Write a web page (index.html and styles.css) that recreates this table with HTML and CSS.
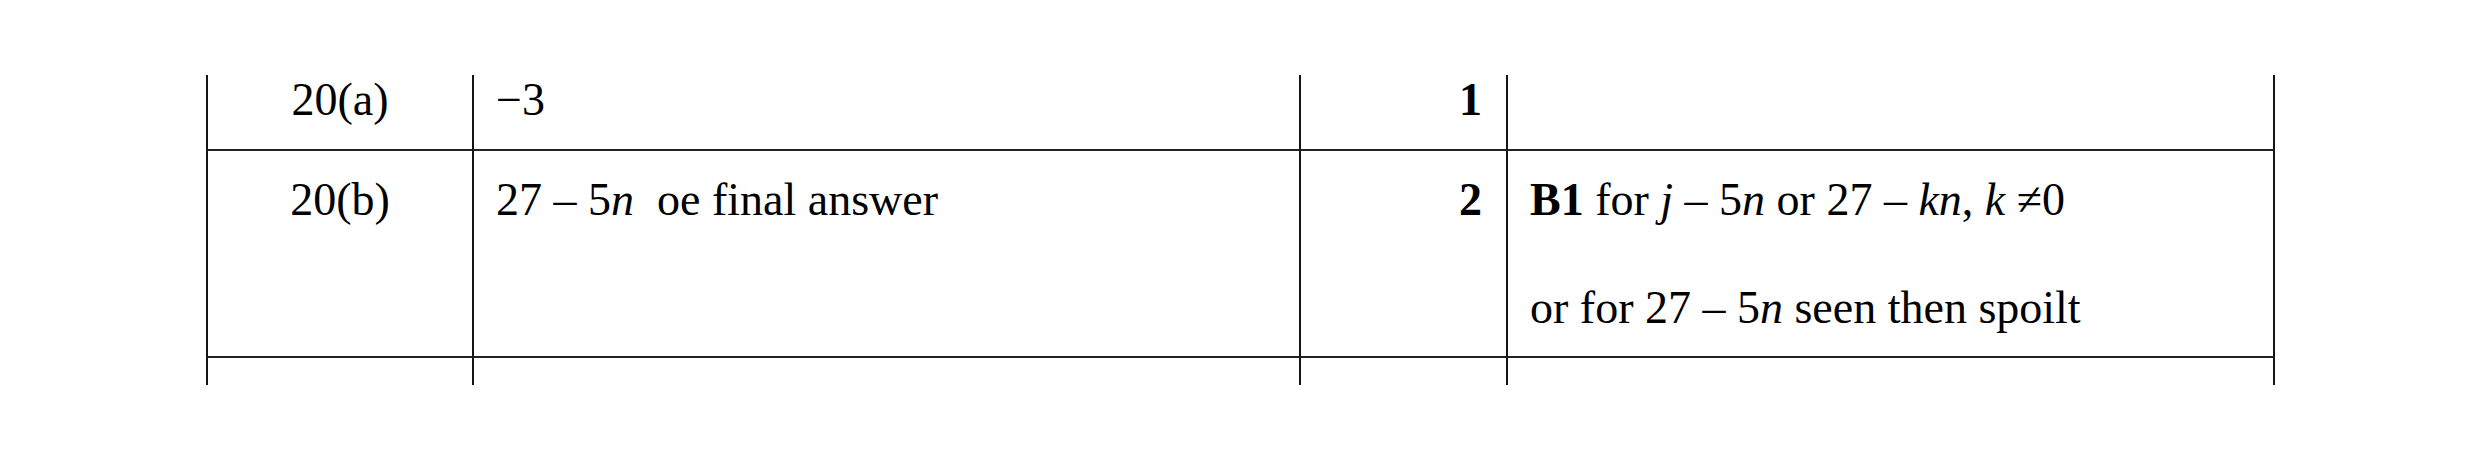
FILE: index.html
```html
<!DOCTYPE html>
<html lang="en">
<head>
<meta charset="utf-8">
<title>Mark scheme</title>
<link rel="stylesheet" href="styles.css">
</head>
<body>
<div class="sheet">
  <div class="ms">
    <div class="cell q first">20(a)</div>
    <div class="cell ans first">&minus;3</div>
    <div class="cell mark first"><b>1</b></div>
    <div class="cell note first last"></div>

    <div class="cell q mid">20(b)</div>
    <div class="cell ans mid">27 – 5<i>n</i>&nbsp; oe final answer</div>
    <div class="cell mark mid"><b>2</b></div>
    <div class="cell note mid last">
      <p><b>B1</b> for <i>j</i> – 5<i>n</i> or 27 – <i>kn</i>, <i>k</i> ≠0</p>
      <p>or for 27 – 5<i>n</i> seen then spoilt</p>
    </div>

    <div class="cell tail"></div>
    <div class="cell tail"></div>
    <div class="cell tail"></div>
    <div class="cell tail last"></div>
  </div>
</div>
</body>
</html>
```

FILE: styles.css
```css
html, body {
  margin: 0;
  padding: 0;
  background: #ffffff;
}

.sheet {
  padding-top: 75px;
}

.ms {
  width: 2069px;
  margin: 0 auto;
  display: grid;
  grid-template-columns: 266px 827px 207px 769px;
  font-family: "Liberation Serif", "Times New Roman", serif;
  font-size: 46px;
  line-height: 50px;
  color: #000;
}

.cell {
  box-sizing: border-box;
  border-left: 2px solid #151515;
}

.cell.last {
  border-right: 2px solid #151515;
}

.first {
  padding-top: 0;
  padding-bottom: 24px;
  border-bottom: 2px solid #222222;
}

.mid {
  padding-top: 24px;
  padding-bottom: 23px;
  border-bottom: 2px solid #222222;
}

.tail {
  height: 27px;
}

.q {
  text-align: center;
}

.ans {
  padding-left: 22px;
}

.mark {
  text-align: right;
  padding-right: 24px;
}

.note {
  padding-left: 22px;
}

.note p {
  margin: 0;
}

.note p + p {
  margin-top: 58px;
}
```
